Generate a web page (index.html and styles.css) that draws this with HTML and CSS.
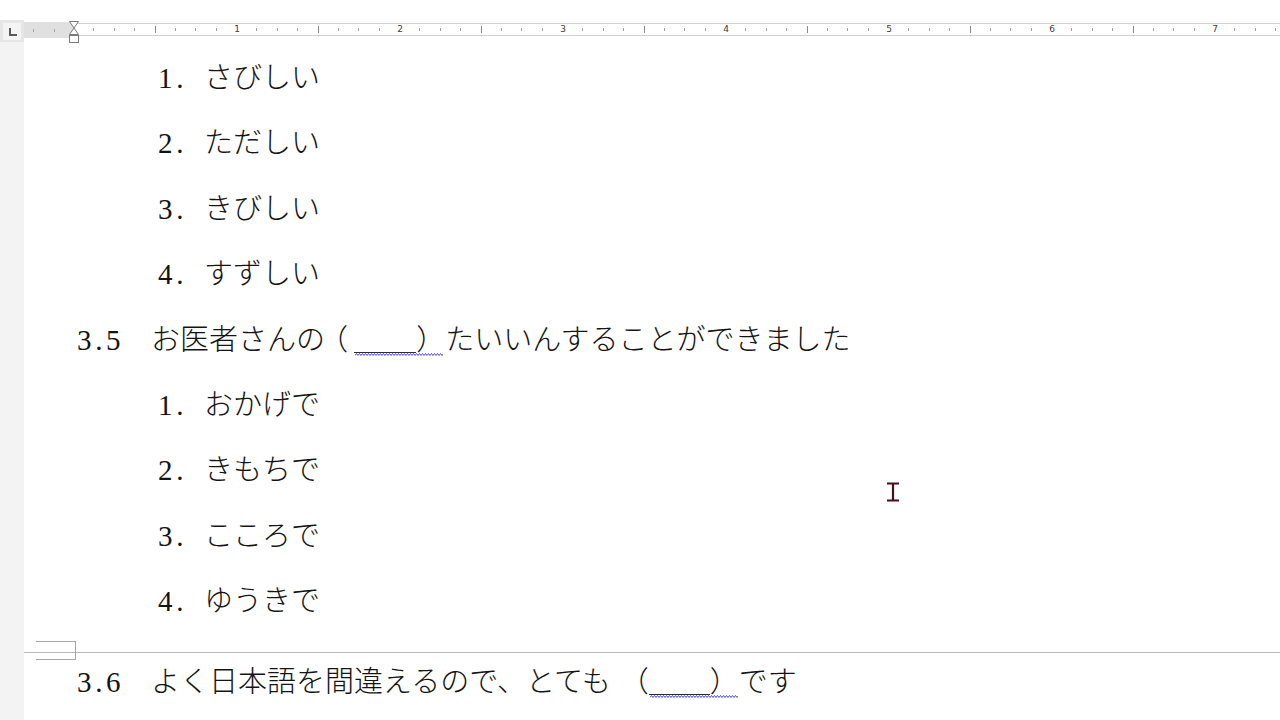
FILE: index.html
```html
<!DOCTYPE html>
<html lang="ja">
<head>
<meta charset="utf-8">
<title>Document</title>
<link rel="stylesheet" href="styles.css">
</head>
<body>
<div class="screen">
  <div class="ruler">
    <div class="rtab"><div class="tabsel"><span class="tabL"></span></div></div>
    <div class="rmargin"></div>
    <div class="rbody">
      <div class="inch"><i></i><i></i><i></i><i></i><i></i><i></i><i></i><i></i><span class="n">1</span></div>
      <div class="inch"><i></i><i></i><i></i><i></i><i></i><i></i><i></i><i></i><span class="n">2</span></div>
      <div class="inch"><i></i><i></i><i></i><i></i><i></i><i></i><i></i><i></i><span class="n">3</span></div>
      <div class="inch"><i></i><i></i><i></i><i></i><i></i><i></i><i></i><i></i><span class="n">4</span></div>
      <div class="inch"><i></i><i></i><i></i><i></i><i></i><i></i><i></i><i></i><span class="n">5</span></div>
      <div class="inch"><i></i><i></i><i></i><i></i><i></i><i></i><i></i><i></i><span class="n">6</span></div>
      <div class="inch"><i></i><i></i><i></i><i></i><i></i><i></i><i></i><i></i><span class="n">7</span></div>
      <div class="inch"><i></i><i></i><i></i><i></i><i></i><i></i><i></i><i></i></div>
    </div>
    <svg class="indent" width="14" height="24" viewBox="0 0 14 24">
      <path d="M2.5 1.5 H11.5 L7 8 L11.5 14.5 H2.5 L7 8 Z" fill="#fff" stroke="#7a7a7a" stroke-width="1"/>
      <rect x="2.5" y="15.5" width="9" height="7" fill="#fff" stroke="#7a7a7a" stroke-width="1"/>
    </svg>
  </div>
  <div class="main">
    <div class="strip"></div>
    <div class="doc">
      <div class="line sub"><span class="lbl">1<span class="dot">.</span></span><span class="jp">さびしい</span></div>
      <div class="line sub"><span class="lbl">2<span class="dot">.</span></span><span class="jp">ただしい</span></div>
      <div class="line sub"><span class="lbl">3<span class="dot">.</span></span><span class="jp">きびしい</span></div>
      <div class="line sub"><span class="lbl">4<span class="dot">.</span></span><span class="jp">すずしい</span></div>
      <div class="line top"><span class="lbl">3<span class="dot">.</span>5</span><span class="jp">お医者さんの<span class="lp lp-a">（</span><span class="blank blank-a"><svg class="wave" width="88" height="5" viewBox="0 0 88 5"><path d="M0 3.5 l1.5-2 1.5 2 1.5-2 1.5 2 1.5-2 1.5 2 1.5-2 1.5 2 1.5-2 1.5 2 1.5-2 1.5 2 1.5-2 1.5 2 1.5-2 1.5 2 1.5-2 1.5 2 1.5-2 1.5 2 1.5-2 1.5 2 1.5-2 1.5 2 1.5-2 1.5 2 1.5-2 1.5 2 1.5-2 1.5 2 1.5-2 1.5 2 1.5-2 1.5 2 1.5-2 1.5 2 1.5-2 1.5 2 1.5-2 1.5 2 1.5-2 1.5 2 1.5-2 1.5 2 1.5-2 1.5 2 1.5-2 1.5 2 1.5-2 1.5 2 1.5-2 1.5 2 1.5-2 1.5 2 1.5-2 1.5 2 1.5-2 1.5 2 1.5-2 1.5 2 1.5-2 1.5 2 1.5-2 1.5 2 1.5-2 1.5 2 1.5-2 1.5 2 1.5-2 1.5 2 1.5-2 1.5 2" fill="none" stroke="#4b4bd0" stroke-width="1"/></svg></span>）たいいんすることができました</span></div>
      <div class="line sub"><span class="lbl">1<span class="dot">.</span></span><span class="jp">おかげで</span></div>
      <div class="line sub"><span class="lbl">2<span class="dot">.</span></span><span class="jp">きもちで</span></div>
      <div class="line sub"><span class="lbl">3<span class="dot">.</span></span><span class="jp">こころで</span></div>
      <div class="line sub"><span class="lbl">4<span class="dot">.</span></span><span class="jp">ゆうきで</span></div>
      <div class="pagebreak"><span class="corner"></span></div>
      <div class="line top last"><span class="lbl">3<span class="dot">.</span>6</span><span class="jp">よく日本語を間違えるので、とても<span class="lp lp-b">（</span><span class="blank blank-b"><svg class="wave" width="88" height="5" viewBox="0 0 88 5"><path d="M0 3.5 l1.5-2 1.5 2 1.5-2 1.5 2 1.5-2 1.5 2 1.5-2 1.5 2 1.5-2 1.5 2 1.5-2 1.5 2 1.5-2 1.5 2 1.5-2 1.5 2 1.5-2 1.5 2 1.5-2 1.5 2 1.5-2 1.5 2 1.5-2 1.5 2 1.5-2 1.5 2 1.5-2 1.5 2 1.5-2 1.5 2 1.5-2 1.5 2 1.5-2 1.5 2 1.5-2 1.5 2 1.5-2 1.5 2 1.5-2 1.5 2 1.5-2 1.5 2 1.5-2 1.5 2 1.5-2 1.5 2 1.5-2 1.5 2 1.5-2 1.5 2 1.5-2 1.5 2 1.5-2 1.5 2 1.5-2 1.5 2 1.5-2 1.5 2 1.5-2 1.5 2 1.5-2 1.5 2 1.5-2 1.5 2 1.5-2 1.5 2 1.5-2 1.5 2 1.5-2 1.5 2" fill="none" stroke="#4b4bd0" stroke-width="1"/></svg></span>）です</span></div>
    </div>
  </div>
  <svg class="ibeam" width="14" height="20" viewBox="0 0 14 20">
    <path d="M1 1.5 H13 M7 1.5 V18.5 M1 18.5 H13" fill="none" stroke="#4a0d1c" stroke-width="2.2"/>
  </svg>
</div>
</body>
</html>
```
FILE: styles.css
```css
html, body {
  margin: 0;
  padding: 0;
  background: #ffffff;
}
.screen {
  position: relative;
  width: 1280px;
  height: 720px;
  overflow: hidden;
  background: #ffffff;
  display: flex;
  flex-direction: column;
}
.ruler {
  position: relative;
  display: flex;
  height: 22px;
  margin-top: 20px;
  flex: none;
}
.rtab {
  width: 24px;
  height: 22px;
  background: #e6e6e6;
  display: flex;
  align-items: center;
  justify-content: center;
}
.tabsel {
  width: 18px;
  height: 17px;
  background: #f4f4f4;
  display: flex;
  align-items: center;
  justify-content: center;
}
.tabL {
  width: 6px;
  height: 6px;
  border-left: 2px solid #5a5a5a;
  border-bottom: 2px solid #5a5a5a;
  margin-top: 2px;
  margin-left: 1px;
}
.rmargin {
  width: 50px;
  height: 16px;
  margin-top: 2px;
  background-color: #e0e0e0;
  background-image:
    linear-gradient(#a8a8a8, #a8a8a8),
    linear-gradient(#a8a8a8, #a8a8a8);
  background-size: 1px 3px, 1px 3px;
  background-position: 9px 7px, 30px 7px;
  background-repeat: no-repeat;
}
.rbody {
  flex: 1;
  display: flex;
  height: 13px;
  margin-top: 3px;
  background: #ffffff;
  border-top: 1px solid #d2d2d2;
  border-bottom: 1px solid #d2d2d2;
  box-sizing: border-box;
  overflow: hidden;
}
.inch {
  flex: none;
  width: 163px;
  display: grid;
  grid-template-columns: repeat(8, 1fr);
  position: relative;
}
.inch i {
  display: block;
  background: linear-gradient(#a0a0a0, #a0a0a0) no-repeat right 4px / 1px 3px;
}
.inch i:nth-child(4) {
  background-size: 1px 7px;
  background-position: right 2px;
  background-image: linear-gradient(#8c8c8c, #8c8c8c);
}
.n {
  position: absolute;
  right: -5px;
  top: 0;
  width: 10px;
  height: 11px;
  background: #ffffff;
  font-family: "DejaVu Sans", "Liberation Sans", sans-serif;
  font-size: 9px;
  line-height: 11px;
  text-align: center;
  color: #3c3c3c;
}
.indent {
  position: absolute;
  left: 67px;
  top: 0px;
}
.main {
  flex: 1;
  display: flex;
}
.strip {
  width: 24px;
  flex: none;
  background: #f3f3f3;
}
.doc {
  flex: 1;
  padding-left: 53px;
  padding-top: 1px;
  color: #141414;
}
.line {
  height: 65.4px;
  line-height: 65.4px;
  white-space: nowrap;
  font-size: 29px;
}
.lbl {
  display: inline-block;
  font-family: "Liberation Serif", serif;
  font-size: 29px;
}
.dot {
  display: inline-block;
  width: 14.5px;
  text-align: center;
}
.top .lbl {
  width: 74px;
}
.sub .lbl {
  margin-left: 81px;
  width: 46px;
}
.jp {
  font-family: "Noto Sans CJK JP", sans-serif;
  font-weight: 300;
}
.lp-a {
  font-feature-settings: "halt" 1;
  margin-left: 8.6px;
}
.lp-b {
  margin-left: 9px;
}
.blank {
  position: relative;
  display: inline-block;
  height: 0;
  border-bottom: 1px solid #2a2a40;
  vertical-align: -3px;
}
.blank-a {
  margin-left: 6px;
  width: 62px;
}
.blank-b {
  width: 61px;
}
.wave {
  position: absolute;
  left: 1px;
  top: 0px;
}
.pagebreak {
  position: relative;
  height: 1px;
  margin-top: 20px;
  margin-left: -53px;
  background: #b8b8b8;
}
.corner {
  position: absolute;
  left: 12px;
  top: -11px;
  width: 39px;
  height: 17px;
  border: 1px solid #a6a6a6;
  border-left: none;
}
.line.last {
  height: 52px;
  line-height: 52px;
}
.ibeam {
  position: absolute;
  left: 886px;
  top: 482px;
}
```
